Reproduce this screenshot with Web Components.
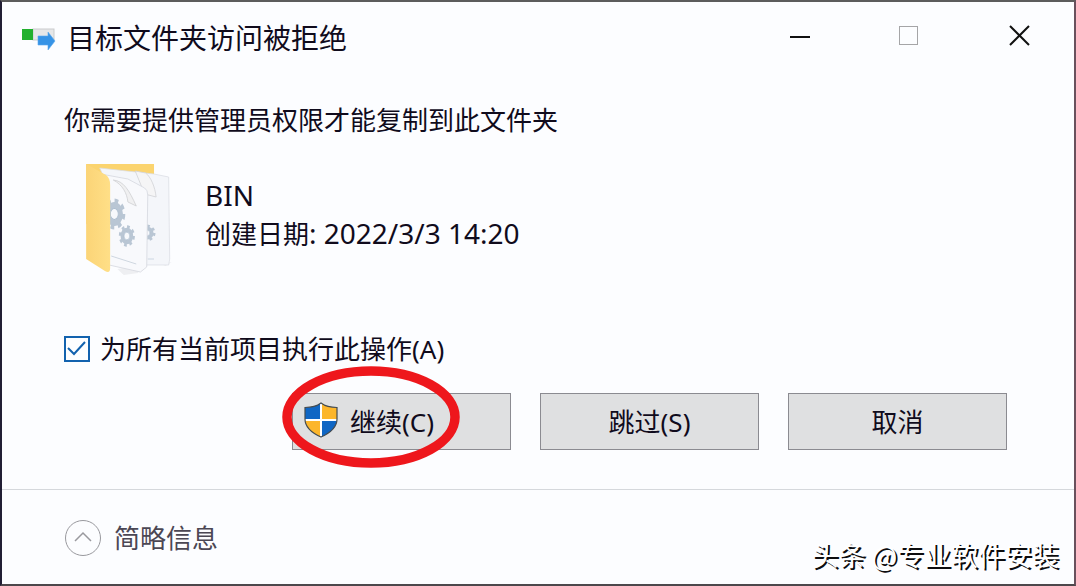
<!DOCTYPE html>
<html lang="zh-CN">
<head>
<meta charset="utf-8">
<meta name="viewport" content="width=device-width, initial-scale=1">
<title>目标文件夹访问被拒绝</title>
<style>
html, body { margin: 0; min-height: 100%; }
body {
  font-family: "Noto Sans", "Noto Sans CJK SC", sans-serif;
  font-size: 26px; line-height: 38px; color: #100b1c;
  background: #5a5357;
}
</style>
</head>
<body>
<dialog-window>
  <transfer-icon slot="icon"></transfer-icon>
  <span slot="title">目标文件夹访问被拒绝</span>
  <span slot="message">你需要提供管理员权限才能复制到此文件夹</span>
  <item-summary slot="item">
    <span slot="name">BIN</span>
    <span slot="label">创建日期</span>
    <span slot="value">: 2022/3/3 14:20</span>
  </item-summary>
  <check-option slot="option">为所有当前项目执行此操作(A)</check-option>
  <dialog-button slot="actions" marked><shield-icon slot="icon"></shield-icon>继续(C)</dialog-button>
  <dialog-button slot="actions">跳过(S)</dialog-button>
  <dialog-button slot="actions">取消</dialog-button>
  <details-toggle slot="footer">简略信息</details-toggle>
  <water-mark slot="mark">头条 @专业软件安装</water-mark>
</dialog-window>

<script>
function define(name, markup) {
  customElements.define(name, class extends HTMLElement {
    constructor() {
      super();
      this.attachShadow({ mode: "open" }).innerHTML = markup;
    }
    connectedCallback() {
      const label = this.getAttribute("label");
      if (label) this.shadowRoot.querySelector("button").setAttribute("aria-label", label);
    }
  });
}

define("transfer-icon", `
<style>:host{display:block;flex:none} svg{display:block}</style>
<svg width="34" height="28" viewBox="0 -4 34 28" aria-hidden="true">
  <rect x="11" y="1" width="21" height="11" fill="#e6e7e8" stroke="#c9cccd"/>
  <rect x="0" y="1" width="11" height="11" fill="#22b02e"/>
  <path d="M16 8h10V4l7 9-7 9v-5H16z" fill="#3693e6" stroke="#5aa9ee" stroke-width=".6"/>
</svg>`);

define("shield-icon", `
<style>:host{display:block;flex:none} svg{display:block}</style>
<svg width="35" height="40" viewBox="-1 0 35 40" aria-hidden="true">
  <defs><clipPath id="c"><path d="M17 1C13 4 7 5.500 1 5.500V17c0 8 7 14 16 18 9-4 16-10 16-18V5.500C27 5.500 21 4 17 1z"/></clipPath></defs>
  <g clip-path="url(#c)">
    <path fill="#0f66c4" d="M0 0h16v17H0zM18 19h16v17H18z"/>
    <path fill="#fcb62b" d="M18 0h16v17H18zM0 19h16v17H0z"/>
    <path fill="#fff" d="M16 0h2v36h-2zM0 17h34v2H0z"/>
  </g>
  <path d="M17 1C13 4 7 5.500 1 5.500V17c0 8 7 14 16 18 9-4 16-10 16-18V5.500C27 5.500 21 4 17 1z" fill="none" stroke="#434b50" stroke-width="1.200"/>
</svg>`);

define("folder-icon", `
<style>:host{display:block;flex:none} svg{display:block}</style>
<svg width="94" height="120" viewBox="1 0 90 120" preserveAspectRatio="none" aria-hidden="true">
  <defs>
    <linearGradient id="f" x1="0" x2="1"><stop offset="0" stop-color="#fbd477"/><stop offset="1" stop-color="#ffdf87"/></linearGradient>
    <clipPath id="back"><path d="M60 20h28v92H60z"/></clipPath>
    <g id="gear">
      <circle r="8" fill="none" stroke="#b9c6d4" stroke-width="6"/>
      <circle r="12" fill="none" stroke="#b9c6d4" stroke-width="4" stroke-dasharray="4.700 4.720"/>
      <circle r="5" fill="#f7f9fc" stroke="#a9bbcd"/>
    </g>
  </defs>
  <path d="M34 111l16-3 4 7-14 2zM76 106l10-2-6 4z" fill="#eeeff2"/>
  <path d="M4 6h65v60H4z" fill="#fbd46f"/>
  <path d="M17 10l52 6 14 3 1 82-1 6-23 0z" fill="#f4f6fa" stroke="#d9dce3" stroke-width=".7"/>
  <path d="M51 13l10 2c5 4 9 14 10 24l-11-3z" fill="#f5f5f6" stroke="#d2d3d6" stroke-width=".8"/>
  <g clip-path="url(#back)"><use href="#gear" transform="translate(62 75) scale(.6)"/></g>
  <path d="M63 101h6" stroke="#cdd7e2"/>
  <path d="M18 16l26 5 16 9q3 2 3 7l-1 72-6 5-30-7z" fill="#f8f9fc" stroke="#d5d8df" stroke-width=".8"/>
  <path d="M30 22c10 1 15 10 22 26l-8-4c-1-9-5-17-14-22" fill="#f0f0f1" stroke="#cfd0d3" stroke-width=".8"/>
  <use href="#gear" transform="translate(31 56) scale(.75 1.100)"/>
  <use href="#gear" transform="translate(43 78) scale(.55 .76)"/>
  <path d="M28 98l24 8" stroke="#c4ced9" stroke-width=".8"/>
  <path d="M4 6l19 11q4 3 4 10v83q0 6-5 3L4 101z" fill="url(#f)"/>
</svg>`);

define("caption-button", `
<style>
:host{display:block;flex:none}
button{width:110px;height:68px;padding:0;border:0;background:none;display:grid;place-items:center;color:#111}
svg{display:none} :host([kind=min]) .min,:host([kind=max]) .max,:host([kind=close]) .close{display:block}
</style>
<button><svg class="min" width="22" height="22" viewBox="0 0 22 22"><path d="M2 12h20" stroke="currentColor" stroke-width="2"/></svg>
<svg class="max" width="22" height="22" viewBox="0 0 22 22"><rect x="1.500" y="1.500" width="18" height="18" fill="none" stroke="#a5a5a7"/></svg>
<svg class="close" width="22" height="22" viewBox="0 0 22 22"><path d="M2 1l19 19M21 1L2 20" fill="none" stroke="currentColor" stroke-width="2"/></svg></button>`);

define("item-summary", `
<style>
:host{display:flex;gap:28px;align-items:flex-start}
div{padding-top:18px;min-width:0}
p{margin:0;height:38px;white-space:nowrap}
.latin{font-size:28px}
</style>
<folder-icon></folder-icon>
<div><p class="latin"><slot name="name"></slot></p><p><slot name="label"></slot><slot class="latin" name="value"></slot></p></div>`);

define("check-option", `
<style>
:host{display:block}
label{display:inline-flex;align-items:center;gap:10px}
.box{display:grid;width:26px;height:26px;flex:none}
input,svg{grid-area:1/1}
input{appearance:none;margin:0;width:26px;height:26px;border:2px solid #1262ae;background:#fdfeff}
svg{pointer-events:none;visibility:hidden}
input:checked + svg{visibility:visible}
</style>
<label><span class="box"><input type="checkbox" checked><svg width="26" height="26" viewBox="0 0 26 26"><path d="M4 12l6 6L21 6" fill="none" stroke="#1262ae" stroke-width="2"/></svg></span><span><slot></slot></span></label>`);

define("dialog-button", `
<style>
:host{display:block;position:relative;flex:0 1 219px;min-width:0}
button{box-sizing:border-box;width:100%;height:57px;padding:0 10px;border:1px solid #8b8b91;background:#dfe0e1;
 font:inherit;color:inherit;display:flex;align-items:center;justify-content:center;gap:12px;white-space:nowrap}
:host([marked]) button{justify-content:flex-start}
.ring{display:none;position:absolute;left:-11px;top:-27px;pointer-events:none}
:host([marked]) .ring{display:block}
</style>
<button><slot name="icon"></slot><span><slot></slot></span></button>
<svg class="ring" width="180" height="104" viewBox="0 0 180 104" aria-hidden="true"><ellipse cx="90" cy="51" rx="84" ry="46" fill="none" stroke="#ee171c" stroke-width="9.500"/></svg>`);

define("details-toggle", `
<style>
:host{display:block}
button{border:0;padding:0;background:none;font:inherit;color:#4b4754;display:flex;align-items:center;gap:12px}
svg{display:block}
</style>
<button aria-expanded="true"><svg width="38" height="38" viewBox="0 0 38 38" aria-hidden="true"><circle cx="19" cy="19" r="17.500" fill="none" stroke="#99999e"/><path d="M11 22l8-8 8 8" fill="none" stroke="#99999e" stroke-width="1.500"/></svg><span><slot></slot></span></button>`);

define("water-mark", `
<style>
:host{display:block;position:absolute;right:15px;bottom:10px;font-family:"Noto Sans CJK SC",sans-serif;font-size:27px;white-space:nowrap;color:#fff;
 text-shadow:2px 2px 0 #0c0c0e}
</style>
<slot></slot>`);

define("dialog-window", `
<style>
:host{display:flex;flex-direction:column;box-sizing:border-box;min-height:100vh;
 border:solid;border-width:2px;border-color:#5c5c5c #69505c #4c474b #211e34;background:#fcfdff;position:relative}
header{display:flex;align-items:center;height:72px;padding-left:20px}
h1{margin:0 auto 0 11px;font-size:28px;font-weight:400;white-space:nowrap}
.controls{display:flex;align-self:flex-start}
main{flex:1;padding:27px 67px 39px 62px}
.message{margin:0;white-space:nowrap}
.item{margin:19px 0 52px 19px}
.actions{display:flex;justify-content:flex-end;gap:29px;margin-top:22px}
footer{border-top:1px solid #d5d8dc;padding:29px 62px 27px}
</style>
<header><slot name="icon"></slot><h1><slot name="title"></slot></h1>
<div class="controls"><caption-button kind="min" label="最小化"></caption-button><caption-button kind="max" label="最大化"></caption-button><caption-button kind="close" label="关闭"></caption-button></div></header>
<main><p class="message"><slot name="message"></slot></p>
<div class="item"><slot name="item"></slot></div>
<slot name="option"></slot>
<div class="actions"><slot name="actions"></slot></div></main>
<footer><slot name="footer"></slot></footer>
<slot name="mark"></slot>`);
</script>
</body>
</html>
